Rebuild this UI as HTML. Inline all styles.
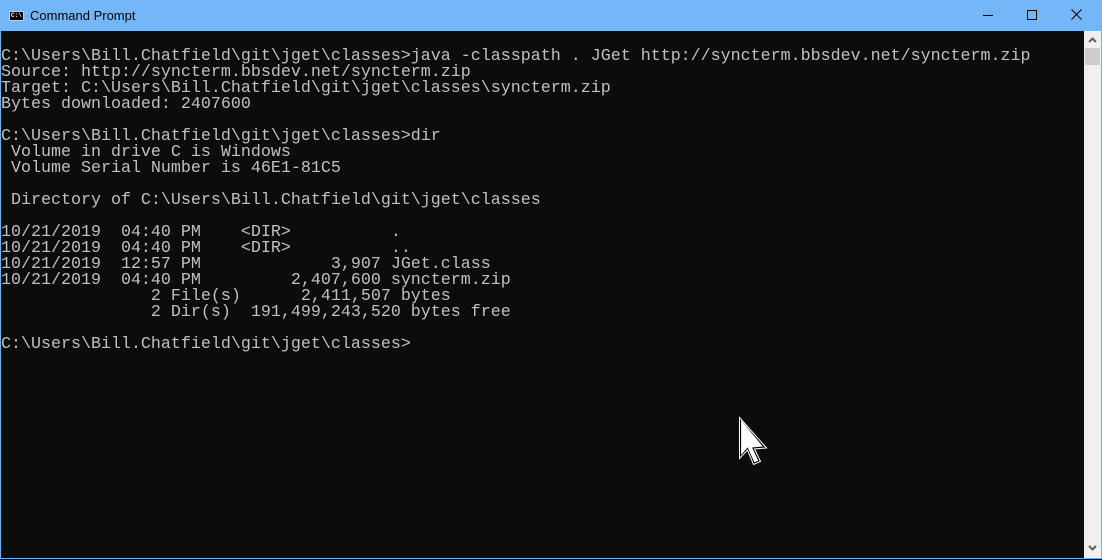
<!DOCTYPE html>
<html><head><meta charset="utf-8"><style>
html,body{margin:0;padding:0;width:1102px;height:560px;overflow:hidden;background:#0c0c0c}
.win{position:absolute;left:0;top:0;width:1100px;height:558px;border:1px solid #6fb1f0;border-top:none;background:#0c0c0c}
.title{position:absolute;left:0;top:0;width:1102px;height:31px;background:#74b7f9}
.title .t{position:absolute;left:30px;top:8px;font:13px "Liberation Sans",sans-serif;color:#000}
.icon{position:absolute;left:9px;top:11px;width:15px;height:10px;background:#000;border:1px solid #ccc;box-sizing:border-box}
.icon span{position:absolute;left:1px;top:0;font:bold 6px "Liberation Mono",monospace;color:#fff;line-height:8px}
pre{position:absolute;left:1px;top:49px;margin:0;font-family:"Liberation Mono",monospace;font-size:16.67px;line-height:16px;color:#c0c0c0}
.sb{position:absolute;left:1084px;top:31px;width:17px;height:527px;background:#f0f0f0}
.thumb{position:absolute;left:1px;top:17px;width:15px;height:17px;background:#cdcdcd}
</style></head><body>
<div class="win"></div>
<div class="title"><div class="icon"><span>C:\</span></div><div class="t">Command Prompt</div>
<div style="position:absolute;left:983px;top:15px;width:10px;height:1px;background:#000"></div>
<div style="position:absolute;left:1027px;top:10px;width:8px;height:8px;border:1px solid #000"></div>
<svg style="position:absolute;left:1071px;top:9px" width="11" height="11"><path d="M0.5 0.5L10.5 10.5M10.5 0.5L0.5 10.5" stroke="#000" stroke-width="1.1"/></svg>
</div>
<pre>C:\Users\Bill.Chatfield\git\jget\classes&gt;java -classpath . JGet http://syncterm.bbsdev.net/syncterm.zip
Source: http://syncterm.bbsdev.net/syncterm.zip
Target: C:\Users\Bill.Chatfield\git\jget\classes\syncterm.zip
Bytes downloaded: 2407600

C:\Users\Bill.Chatfield\git\jget\classes&gt;dir
 Volume in drive C is Windows
 Volume Serial Number is 46E1-81C5

 Directory of C:\Users\Bill.Chatfield\git\jget\classes

10/21/2019  04:40 PM    &lt;DIR&gt;          .
10/21/2019  04:40 PM    &lt;DIR&gt;          ..
10/21/2019  12:57 PM             3,907 JGet.class
10/21/2019  04:40 PM         2,407,600 syncterm.zip
               2 File(s)      2,411,507 bytes
               2 Dir(s)  191,499,243,520 bytes free

C:\Users\Bill.Chatfield\git\jget\classes&gt;</pre>
<div class="sb"><div class="thumb"></div>
<svg style="position:absolute;left:4px;top:6px" width="9" height="6"><path d="M1 5L4.5 1.5L8 5" stroke="#606060" stroke-width="2" fill="none"/></svg>
<svg style="position:absolute;left:4px;top:514px" width="9" height="6"><path d="M1 1L4.5 4.5L8 1" stroke="#606060" stroke-width="2" fill="none"/></svg>
</div>
<svg style="position:absolute;left:737px;top:415px" width="34" height="52"><path d="M3.5 3.5V41.5L10.5 33.5L17 48L22 46L16 33L27 32Z" fill="#fff" stroke="#000" stroke-width="1.2"/><path d="M2.5 2.5V43.5L10.5 35L16.5 49.5L23.5 46.5L17.5 34L29.5 33Z" fill="none" stroke="#fff" stroke-width="1"/></svg>
</body></html>
